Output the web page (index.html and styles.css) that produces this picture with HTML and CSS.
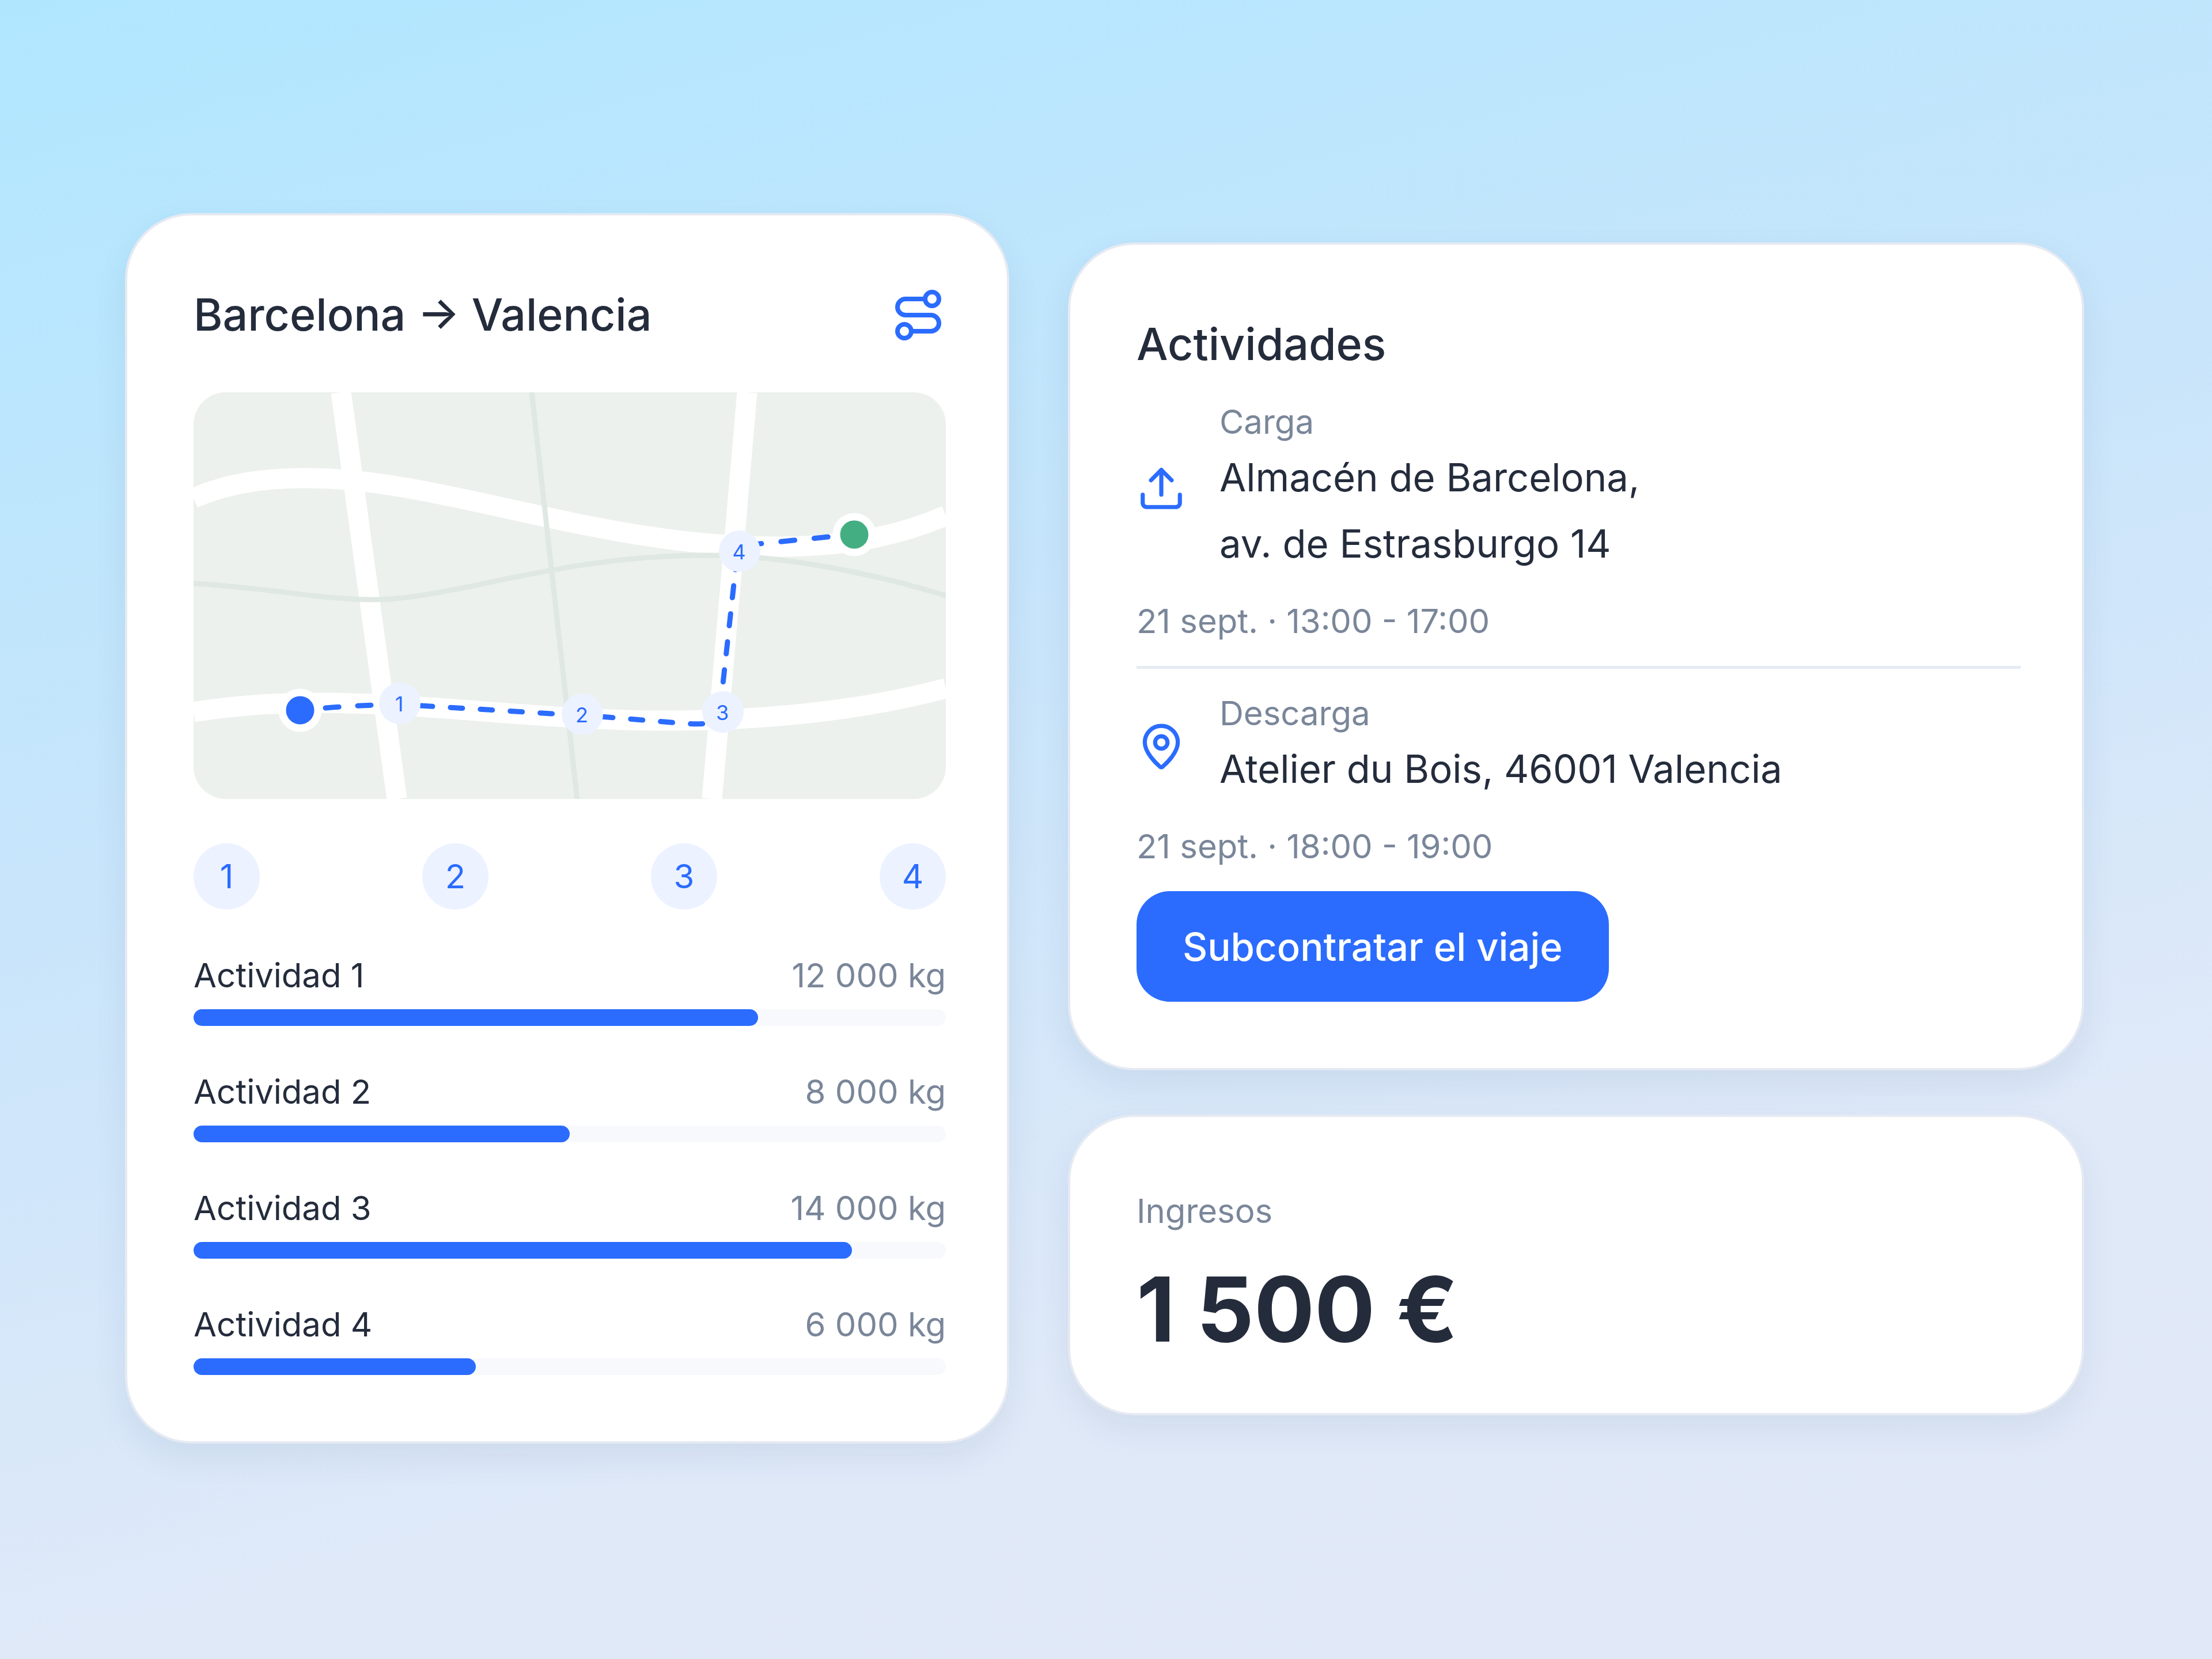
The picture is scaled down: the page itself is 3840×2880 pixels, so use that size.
FILE: index.html
```html
<!DOCTYPE html>
<html lang="es">
<head>
  <meta charset="utf-8">
  <title>Barcelona → Valencia</title>
  <link rel="stylesheet" href="styles.css">
</head>
<body>
  <main class="page">
    <section class="card">
      <header class="card-header">
        <h2 class="title">Barcelona → Valencia</h2>
        <svg class="icon icon-large" viewBox="0 0 24 24" aria-hidden="true">
          <circle cx="6" cy="19" r="3"/>
          <path d="M9 19h8.5a3.5 3.5 0 0 0 0-7h-11a3.5 3.5 0 0 1 0-7H15"/>
          <circle cx="18" cy="5" r="3"/>
        </svg>
      </header>

      <svg class="map" viewBox="0 0 1306 706" role="img" aria-label="Mapa de la ruta">
        <g class="road">
          <path d="M0 184C60 157 125 149 197 149C430 149 700 268 1010 268C1110 268 1206 257 1306 214"/>
          <path d="M0 555C75 543 150 539 215 539C400 539 620 570 815 570C980 570 1150 555 1306 514"/>
          <path d="M256 0L353 706"/>
          <path d="M961 0L900 706"/>
        </g>
        <g class="street">
          <path d="M0 332C120 338 220 360 310 360C450 360 630 283 890 283C1030 283 1190 317 1306 353"/>
          <path d="M587 0L666 706"/>
        </g>
        <g class="route">
          <path d="M229 548Q290 543 326 543" stroke-dasharray="23 33"/>
          <path d="M394 544L640 559" stroke-dasharray="21 31"/>
          <path d="M707 563L840 574Q880 578 905 573" stroke-dasharray="21 31"/>
          <path d="M943 287L918 515" stroke-dasharray="21 28"/>
          <path d="M962 265L1112 250" stroke-dasharray="24 34"/>
        </g>
        <circle class="end start" cx="185" cy="552" r="31"/>
        <circle class="end finish" cx="1147" cy="247" r="31"/>
        <g class="stop">
          <circle cx="358" cy="540" r="36"/>
          <circle cx="675" cy="559" r="36"/>
          <circle cx="919" cy="555" r="36"/>
          <circle cx="948" cy="276" r="36"/>
          <text x="357" y="554">1</text>
          <text x="674" y="573">2</text>
          <text x="918" y="569">3</text>
          <text x="947" y="290">4</text>
        </g>
      </svg>

      <ul class="steps">
        <li class="step">1</li>
        <li class="step">2</li>
        <li class="step">3</li>
        <li class="step">4</li>
      </ul>

      <ul class="loads">
        <li>
          <div class="load-row"><span>Actividad 1</span><span class="muted">12 000 kg</span></div>
          <div class="bar"><div class="bar-fill" style="width: 75%"></div></div>
        </li>
        <li>
          <div class="load-row"><span>Actividad 2</span><span class="muted">8 000 kg</span></div>
          <div class="bar"><div class="bar-fill" style="width: 50%"></div></div>
        </li>
        <li>
          <div class="load-row"><span>Actividad 3</span><span class="muted">14 000 kg</span></div>
          <div class="bar"><div class="bar-fill" style="width: 87.5%"></div></div>
        </li>
        <li>
          <div class="load-row"><span>Actividad 4</span><span class="muted">6 000 kg</span></div>
          <div class="bar"><div class="bar-fill" style="width: 37.5%"></div></div>
        </li>
      </ul>
    </section>

    <div class="column">
      <section class="card card-activities">
        <h2 class="title">Actividades</h2>
        <div class="activity">
          <svg class="icon" viewBox="0 0 24 24" aria-hidden="true">
            <path d="M21 15v4a2 2 0 0 1-2 2H5a2 2 0 0 1-2-2v-4"/>
            <path d="M17 8l-5-5-5 5"/>
            <path d="M12 3v12"/>
          </svg>
          <div>
            <p class="muted">Carga</p>
            <p class="address">Almacén de Barcelona,<br>av. de Estrasburgo 14</p>
          </div>
        </div>
        <p class="muted">21 sept. · 13:00 - 17:00</p>
        <hr class="divider">
        <div class="activity">
          <svg class="icon" viewBox="0 0 24 24" aria-hidden="true">
            <path d="M20 10c0 4.993-5.539 10.193-7.399 11.799a1 1 0 0 1-1.202 0C9.539 20.193 4 14.993 4 10a8 8 0 0 1 16 0"/>
            <circle cx="12" cy="10" r="3"/>
          </svg>
          <div>
            <p class="muted">Descarga</p>
            <p class="address">Atelier du Bois, 46001 Valencia</p>
          </div>
        </div>
        <p class="muted">21 sept. · 18:00 - 19:00</p>
        <button class="button" type="button">Subcontratar el viaje</button>
      </section>

      <section class="card card-income">
        <p class="income-label muted">Ingresos</p>
        <p class="income-value">1 500 €</p>
      </section>
    </div>
  </main>
</body>
</html>
```

FILE: styles.css
```css
* {
  box-sizing: border-box;
}

body {
  margin: 0;
  font-family: Inter, sans-serif;
  font-size: 58px;
  line-height: 77px;
  color: #242c3c;
  background: linear-gradient(165deg, #b0e7ff 0%, #c8e5fb 40%, #e0e9f8 75%, #e1e9f8 100%);
}

h2, p, ul {
  margin: 0;
  padding: 0;
}

ul {
  list-style: none;
}

.page {
  min-height: 100vh;
  padding: 0 222px 4px 217px;
  display: grid;
  grid-template-columns: 1535fr 1764fr;
  column-gap: 102px;
  align-items: center;
}

.column {
  display: flex;
  flex-direction: column;
  gap: 77px;
  padding-top: 2px;
}

.card {
  display: flex;
  flex-direction: column;
  gap: 77px;
  padding: 115px 106px 115px 115px;
  background: #fff;
  border: 4px solid #e6eaf2;
  border-radius: 115px;
  box-shadow: 0 24px 58px rgba(30, 60, 100, 0.08);
}

.card-activities {
  gap: 39px;
}

.card-income {
  gap: 58px;
}

.card-header {
  display: flex;
  align-items: center;
  justify-content: space-between;
}

.title {
  font-size: 77px;
  line-height: 115px;
  font-weight: 500;
}

.muted {
  color: #7a8699;
}

/* Icons */
.icon {
  width: 86px;
  height: 86px;
  flex: none;
  fill: none;
  stroke: #2b6cff;
  stroke-width: 2;
  stroke-linecap: round;
  stroke-linejoin: round;
}

.icon-large {
  width: 96px;
  height: 96px;
}

/* Map */
.map {
  display: block;
  width: 100%;
  height: auto;
  background: #ecf1ed;
  border-radius: 56px;
}

.road {
  fill: none;
  stroke: #fff;
  stroke-width: 35;
}

.street {
  fill: none;
  stroke: #dfe8e2;
  stroke-width: 9;
}

.route {
  fill: none;
  stroke: #2b6cff;
  stroke-width: 9;
  stroke-linecap: round;
}

.end {
  stroke: #fff;
  stroke-width: 13;
}

.start {
  fill: #2b6cff;
}

.finish {
  fill: #43ae82;
}

.stop {
  fill: #ecf2ff;
}

.stop text {
  fill: #2b6cff;
  font-size: 36px;
  text-anchor: middle;
}

/* Numbered steps */
.steps {
  display: flex;
  justify-content: space-between;
}

.step {
  width: 115px;
  height: 115px;
  line-height: 115px;
  text-align: center;
  color: #2b6cff;
  background: #ecf2ff;
  border-radius: 50%;
}

/* Load bars */
.loads {
  display: flex;
  flex-direction: column;
  gap: 77px;
}

.load-row {
  display: flex;
  justify-content: space-between;
  line-height: 74px;
  margin-bottom: 22px;
}

.bar {
  height: 29px;
  background: #f8f9fd;
  border-radius: 15px;
}

.bar-fill {
  height: 100%;
  background: #2b6cff;
  border-radius: 15px;
}

/* Activities */
.activity {
  display: flex;
  align-items: center;
  gap: 58px;
}

.address {
  font-size: 67px;
  line-height: 115px;
}

.divider {
  width: 100%;
  height: 5px;
  margin: 0;
  border: none;
  background: #e6ebf3;
}

.button {
  align-self: flex-start;
  height: 192px;
  padding: 0 80px;
  font-family: inherit;
  font-size: 67px;
  font-weight: 500;
  color: #fff;
  background: #2b6cff;
  border: none;
  border-radius: 58px;
  cursor: pointer;
}

/* Income */
.income-label {
  line-height: 96px;
}

.income-value {
  font-size: 156px;
  line-height: 130px;
  font-weight: 700;
}
```
